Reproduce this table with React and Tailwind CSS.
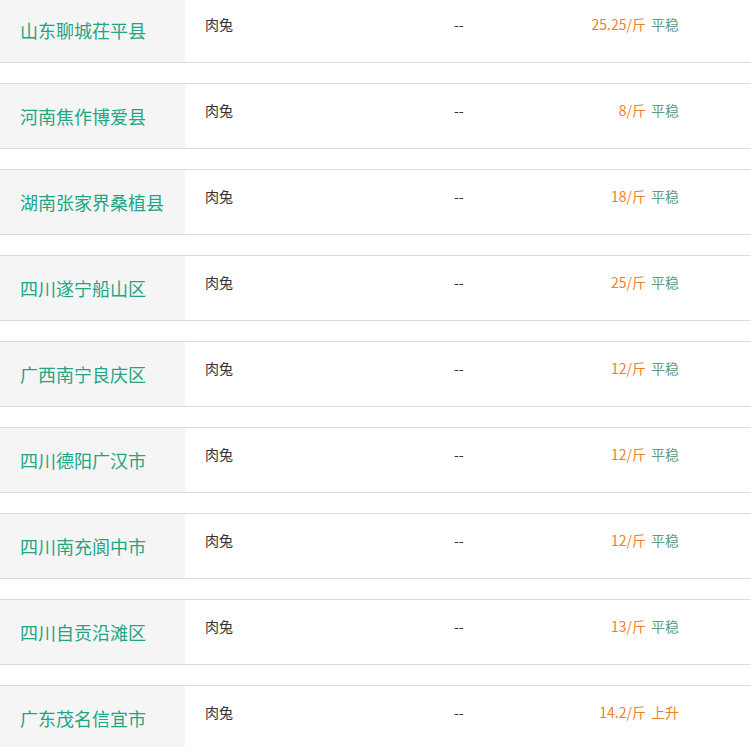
import React from "react";

const rows = [
  ["山东聊城茌平县", "25.25/斤", "平稳"],
  ["河南焦作博爱县", "8/斤", "平稳"],
  ["湖南张家界桑植县", "18/斤", "平稳"],
  ["四川遂宁船山区", "25/斤", "平稳"],
  ["广西南宁良庆区", "12/斤", "平稳"],
  ["四川德阳广汉市", "12/斤", "平稳"],
  ["四川南充阆中市", "12/斤", "平稳"],
  ["四川自贡沿滩区", "13/斤", "平稳"],
  ["广东茂名信宜市", "14.2/斤", "上升"],
];

export default function App() {
  return (
    <div
      className="w-[751px] h-[747px] overflow-hidden bg-white"
      style={{ fontFamily: '"Microsoft YaHei", "Noto Sans CJK SC", "Noto Sans", sans-serif' }}
    >
      <div className="-mt-[3px] flex flex-col gap-[20px]">
        {rows.map(([name, price, status], i) => (
          <div key={i} className="flex h-[66px] border-y border-[#dddddd]">
            <div className="w-[185px] shrink-0 bg-[#f5f5f5] flex items-center pl-[20px] text-[18px] text-[#22a584]">
              {name}
            </div>
            <div className="flex items-start pt-[16px] text-[14px] leading-[20px]">
              <div className="w-[269px] pl-[20px] text-[#333333]">肉兔</div>
              <div className="w-[80px] text-[#333333]">--</div>
              <div className="w-[112px] text-right text-[#ee7f2d]">{price}</div>
              <div
                className={
                  "ml-[5px] " + (status === "上升" ? "text-[#ee7f2d]" : "text-[#5f9c80]")
                }
              >
                {status}
              </div>
            </div>
          </div>
        ))}
      </div>
    </div>
  );
}
